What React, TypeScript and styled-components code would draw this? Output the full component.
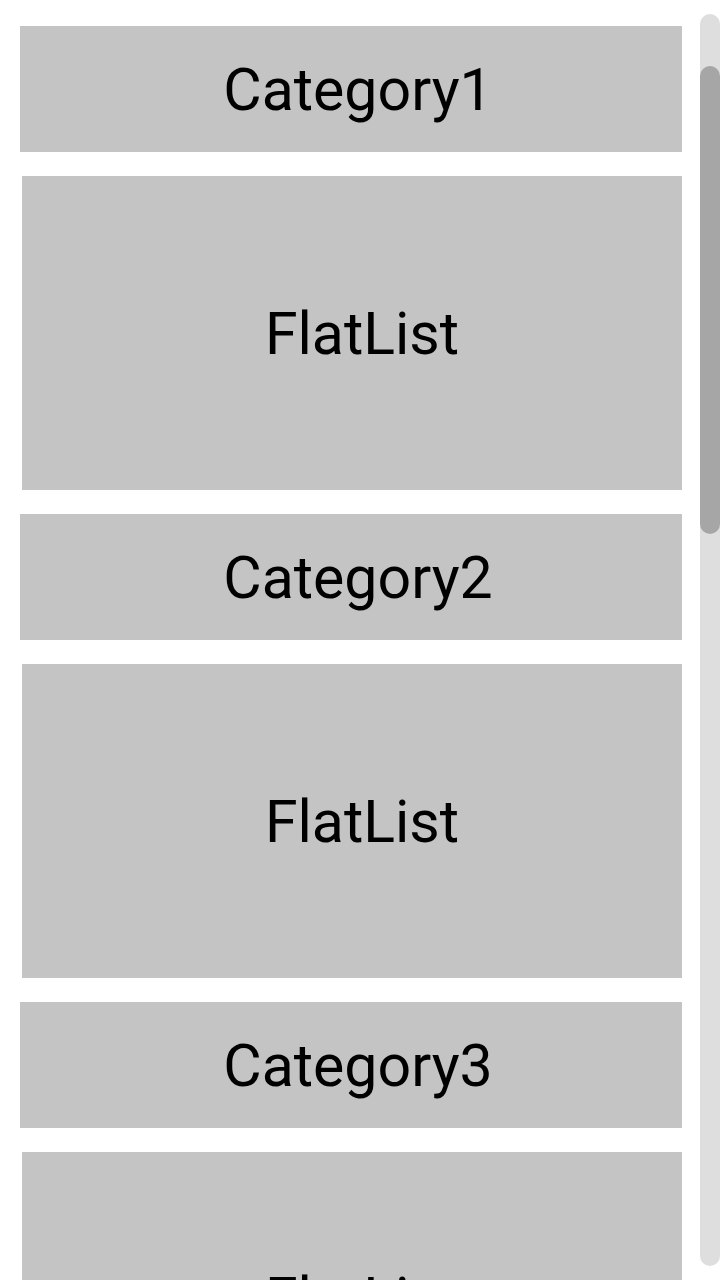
import React from 'react'
import styled, { createGlobalStyle } from 'styled-components'

const GlobalStyle = createGlobalStyle`
	html, body {
		margin: 0;
		padding: 0;
		background: #ffffff;
		overflow: hidden;
	}
	body {
		font-family: Roboto, 'Noto Sans', sans-serif;
	}
`

const sections = ['Category1', 'Category2', 'Category3']

const App: React.FC = () => {
	return (
		<>
			<GlobalStyle />
			<Screen>
				<Content>
					{sections.map((name, i) => (
						<Section key={name}>
							<CategoryBox>
								<Label>{name}</Label>
							</CategoryBox>
							<ListBox $last={i === sections.length - 1}>
								<Label>FlatList</Label>
							</ListBox>
						</Section>
					))}
				</Content>
				<Track>
					<Thumb />
				</Track>
			</Screen>
		</>
	)
}

export default App

const Screen = styled.div`
	width: 720px;
	height: 1280px;
	display: flex;
	overflow: hidden;
	background: #ffffff;
`

const Content = styled.div`
	width: 662px;
	padding: 26px 0 0 20px;
	display: flex;
	flex-direction: column;
	gap: 24px;
	flex-shrink: 0;
`

const Section = styled.div`
	display: flex;
	flex-direction: column;
	gap: 24px;
`

const Box = styled.div`
	background: #c4c4c4;
	display: flex;
	align-items: center;
	justify-content: center;
	flex-shrink: 0;
`

const CategoryBox = styled(Box)`
	height: 126px;
	padding-left: 14px;
`

const ListBox = styled(Box)<{ $last?: boolean }>`
	height: ${({ $last }) => ($last ? '292px' : '314px')};
	margin-left: 2px;
	padding-left: 20px;
`

const Label = styled.span`
	font-family: Roboto, 'Noto Sans', sans-serif;
	font-size: 59px;
	color: #000000;
	line-height: 1;
	white-space: nowrap;
`

const Track = styled.div`
	width: 20px;
	height: 1252px;
	margin: 14px 0 0 18px;
	border-radius: 10px;
	background: #dedede;
	display: flex;
	flex-direction: column;
	flex-shrink: 0;
`

const Thumb = styled.div`
	width: 20px;
	height: 468px;
	margin-top: 52px;
	border-radius: 10px;
	background: #a6a6a6;
`
